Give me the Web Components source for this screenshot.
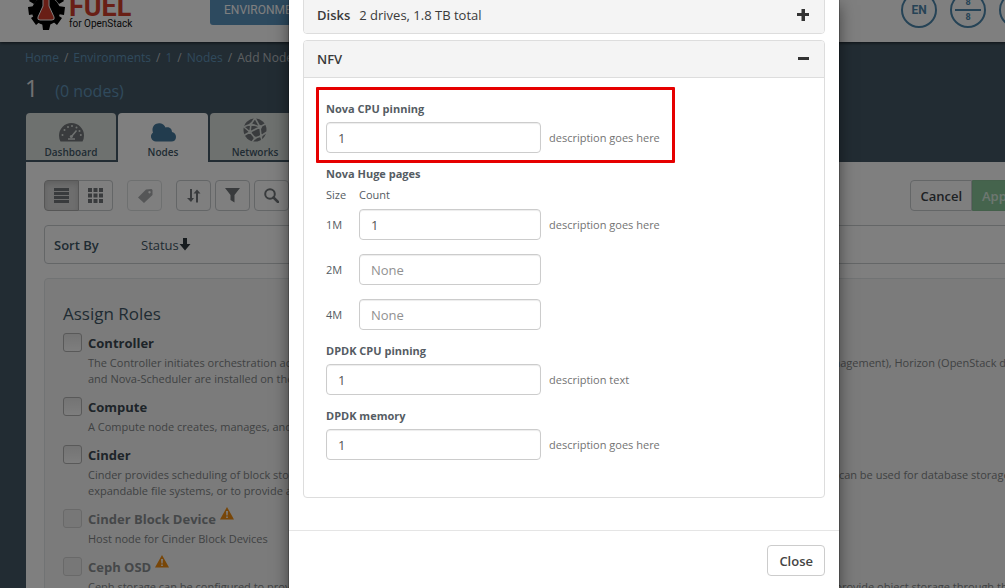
<!DOCTYPE html>
<html lang="en">
<head>
<meta charset="utf-8">
<title>Fuel for OpenStack - Add Nodes</title>
<style>
html, body { margin: 0; height: 100%; overflow: hidden; }
body { font-family: "Open Sans", "Noto Sans", sans-serif; font-size: 13px; color: #415766; background: #fff; }
</style>
</head>
<body>
<fuel-app></fuel-app>
<script>
const define = (name, html, init) => {
  const template = document.createElement('template');
  template.innerHTML = html;
  customElements.define(name, class extends HTMLElement {
    constructor() {
      super();
      this.attachShadow({ mode: 'open' }).append(template.content.cloneNode(true));
    }
    connectedCallback() {
      if (init && !this.ready) { this.ready = true; init(this, this.shadowRoot); }
    }
  });
};

/* Top bar: logo, navigation and round status buttons */
define('fuel-header', `
<style>
:host { display: flex; align-items: flex-end; height: 42px; overflow: hidden; background: #fff; box-shadow: 0 1px 3px rgba(0,0,0,.6); position: relative; font-family: "Roboto", sans-serif; }
.logo { display: flex; align-items: flex-end; gap: 4px; margin-left: 28px; padding-bottom: 12px; width: 182px; color: #111; }
.gear { width: 37px; height: 44px; flex: none; }
.words { display: flex; flex-direction: column; }
.words b { color: #d23f2c; font-size: 27px; line-height: 21px; }
.words span { font-size: 10px; line-height: 12px; white-space: nowrap; }
nav a { display: block; box-sizing: border-box; height: 38px; padding: 14px 14px 0; margin-bottom: 17px; border-radius: 3px; background: #5a94bf; color: #fff; font-size: 12px; line-height: 18px; text-decoration: none; }
.status { display: flex; gap: 13px; margin-left: auto; padding: 0 44px 14px 0; }
button { box-sizing: border-box; width: 36px; height: 36px; padding: 0; border: 2px solid #4c87ad; border-radius: 50%; background: none; color: #4c87ad; font: bold 12px/32px "Roboto", sans-serif; }
.nodes { display: flex; flex-direction: column; align-items: center; justify-content: center; font-size: 9px; line-height: 13px; }
.nodes i { width: 26px; height: 2px; background: #4c87ad; }
</style>
<div class="logo">
<svg class="gear" viewBox="0 0 37 44"><g fill="#000"><circle cx="18" cy="25" r="14"/><path d="M14 36h9l-2 8h-6zM3 32l6-4 5 6-6 5zM34 32l-6-4-5 6 6 5zM0 21l7-1v8l-6 1zM37 21l-7-1v8l6 1zM4 11l6 2-4 5-5-3zM33 11l-6 2 4 5 5-3z"/></g><path d="M15 8h6v12l5 11q1 3-2 3H12q-3 0-2-3l5-11z" fill="#d23f2c" stroke="#fff" stroke-width="1"/></svg>
<div class="words"><b>FUEL</b><span>for OpenStack</span></div></div>
<nav><a href="#environments">ENVIRONMENTS</a></nav>
<div class="status"><button>EN</button><button class="nodes"><span>8</span><i></i><span>8</span></button><button aria-label="User"></button><button aria-label="Notifications"></button></div>
`);

define('fuel-tab', `
<style>
:host { display: block; width: 90px; }
a { display: flex; flex-direction: column; align-items: center; justify-content: flex-end; box-sizing: border-box; height: 47px; padding-bottom: 1px; border-radius: 4px 4px 0 0; background: #dde2df; color: #415766; font-size: 10px; font-weight: 600; line-height: 14px; text-decoration: none; gap: 3px; }
:host([active]) a { height: 49px; padding-bottom: 3px; background: #fff; }
::slotted(svg) { display: block; }
</style>
<a href="#tab"><slot name="icon"></slot><slot></slot></a>
`);

define('tool-button', `
<style>
:host { display: block; }
button { display: flex; align-items: center; justify-content: center; box-sizing: border-box; width: 35px; height: 31px; padding: 0; border: 1px solid #c8ccce; border-radius: 4px; background: #fff; color: #72777a; }
:host([disabled]) button { opacity: .6; }
:host([side=left]) button { border-radius: 4px 0 0 4px; background: #dcdcdc; border-color: #adadad; box-shadow: inset 0 3px 5px rgba(0,0,0,.125); }
:host([side=right]) button { border-radius: 0 4px 4px 0; border-left: 0; width: 34px; }
</style>
<button aria-label="Tool"><slot></slot></button>
`);

define('role-item', `
<style>
:host { display: grid; grid-template-columns: 19px 1fr; column-gap: 6px; row-gap: 2px; margin-bottom: 10px; }
input { appearance: none; box-sizing: border-box; width: 19px; height: 19px; margin: 0; border: 1px solid #b2b2b2; border-radius: 3px; background: linear-gradient(#e8e8e8, #fcfcfc); }
label { display: flex; align-items: flex-start; gap: 4px; height: 20px; font-size: 13px; font-weight: 700; line-height: 20px; color: #3c4952; }
p { grid-column: 2; margin: 0; font-size: 11px; line-height: 16px; color: #808486; white-space: nowrap; }
svg { display: none; width: 14px; height: 13px; margin-top: -2px; }
:host([warn]) svg { display: block; }
:host([warn]) label { color: #8a8f92; }
:host([warn]) input { border-color: #d2d2d2; background: #efefef; }
</style>
<input type="checkbox" id="role"><label for="role"><slot name="name"></slot><svg viewBox="0 0 14 13"><path d="M7 0 14 12.5H0z" fill="#f08c10"/><path d="M6.1 4h1.8l-.3 4.6H6.4zM6.2 9.6h1.6v1.5H6.2z" fill="#fff"/></svg></label>
<p><slot></slot></p>
`, (host, root) => { root.querySelector('input').disabled = host.hasAttribute('warn'); });

/* Page behind the dialog */
define('nodes-page', `
<style>
:host { display: block; min-height: 100%; background: #455966; }
.crumbs { display: flex; gap: 5px; padding: 7px 25px 0; font-size: 12px; line-height: 18px; color: #b9bfc3; }
.crumbs a { color: #6094ba; text-decoration: none; }
h1 { display: flex; align-items: baseline; gap: 17px; margin: 7px 25px 0; height: 39px; font-size: 23px; line-height: 28px; font-weight: 400; color: #e4e6e8; }
h1 span { font-size: 16px; color: #6094ba; }
.tabs { display: flex; gap: 2px; height: 49px; margin: 0 26px; }
main { margin: 0 26px; padding: 18px 18px 60px; background: #fff; }
/* the white band of the content runs on to the right edge of the window */
.bar { display: flex; align-items: center; height: 31px; }
.group { display: flex; }
.mid { margin: 0 14px; }
.tools { display: flex; gap: 4px; }
.actions { display: flex; margin-left: auto; }
.actions button { box-sizing: border-box; height: 31px; padding: 0 9px; border: 1px solid #c8ccce; border-radius: 4px 0 0 4px; background: #fff; color: #3a4248; font: 600 13px/18px "Open Sans", sans-serif; }
.actions .apply { width: 112px; border-color: #88c197; border-radius: 0 4px 4px 0; background: #8ac99b; color: #ddeee2; white-space: nowrap; }
.sort { display: flex; align-items: center; box-sizing: border-box; height: 39px; margin-top: 14px; padding: 0 9px; border: 1px solid #c8ccce; border-radius: 4px; font-size: 13px; }
.sort b { width: 87px; font-weight: 600; }
section { box-sizing: border-box; margin-top: 14px; padding: 24px 18px 40px; border: 1px solid #e3e6e8; border-radius: 4px; background: #f7f7f7; height: 600px; }
h2 { margin: 0 0 8px; font-size: 17px; font-weight: 400; line-height: 22px; color: #415766; }
</style>
<div class="crumbs"><a href="#h">Home</a><span>/</span><a href="#e">Environments</a><span>/</span><a href="#1">1</a><span>/</span><a href="#n">Nodes</a><span>/</span><span>Add Nodes</span></div>
<h1>1<span>(0 nodes)</span></h1>
<div class="tabs">
<fuel-tab><svg slot="icon" width="25" height="19" viewBox="0 0 25 19"><path d="M12.5 0A12.5 12.5 0 0 0 0 12.500Q0 16 1.500 18.500H23.500Q25 16 25 12.500A12.500 12.500 0 0 0 12.500 0z" fill="#72777a"/><g fill="#dde2df"><circle cx="3.500" cy="12" r="1"/><circle cx="5.500" cy="7" r="1"/><circle cx="9" cy="4" r="1"/><circle cx="13" cy="3" r="1"/><circle cx="17.500" cy="4.500" r="1"/><circle cx="20.500" cy="8" r="1"/><circle cx="21.800" cy="12" r="1"/></g><path d="m17.500 7.500-5 6M9 16h7" stroke="#dde2df" stroke-width="1.500"/><circle cx="12.300" cy="13.500" r="1.500" fill="#dde2df"/></svg>Dashboard</fuel-tab>
<fuel-tab active><svg slot="icon" width="25" height="19" viewBox="0 0 25 19"><path d="M5 18.500A5 5 0 0 1 2 9.500C0 4 4-.500 9 .200c3 .300 4.500 2 5.500 4.300 3-1 6.500.500 6.500 4.500 3 .500 4 3 4 5 0 3-2 4.500-4.500 4.500z" fill="#44799c"/></svg>Nodes</fuel-tab>
<fuel-tab><svg slot="icon" width="24" height="24" viewBox="0 0 24 24"><circle cx="12" cy="12" r="11.500" fill="#72777a"/><g fill="none" stroke="#dde2df" stroke-width="1.600"><path d="M0 9 8 6l9 3 7-4M8 6 12 0l5 9 1 9 6-4M8 6l-1 8-7 4M7 14l10-5M7 14l5 6 6-2M12 20l-3 4M18 18l1 5M1 9l6 5"/></g><g fill="#dde2df"><circle cx="8" cy="6" r="1.500"/><circle cx="17" cy="9" r="2"/><circle cx="7" cy="14" r="1.800"/><circle cx="12" cy="20" r="1.500"/><circle cx="18" cy="18" r="1.500"/></g></svg>Networks</fuel-tab>
</div>
<main>
<div class="bar">
<div class="group"><tool-button side="left"><svg width="15" height="15"><path d="M0 0h15v3H0zM0 4h15v3H0zM0 8h15v3H0zM0 12h15v3H0z" fill="currentColor"/></svg></tool-button><tool-button side="right"><svg width="15" height="15"><path d="M0 0h4v4H0zM5.500 0h4v4h-4zM11 0h4v4h-4zM0 5.500h4v4H0zM5.500 5.500h4v4h-4zM11 5.500h4v4h-4zM0 11h4v4H0zM5.500 11h4v4h-4zM11 11h4v4h-4z" fill="currentColor"/></svg></tool-button></div>
<tool-button class="mid" disabled><svg width="16" height="16"><path d="M9 1.500 14.500 1l1 1 .0 5L7 15 1 9.500zM12.500 3a1.200 1.200 0 1 0 .01 0z" fill="currentColor" fill-rule="evenodd"/></svg></tool-button>
<div class="tools">
<tool-button><svg width="14" height="14"><path d="M3 0h2v9h2l-3 4-4-4h3zM9 13.500h2v-9h2.500L10 .500 6.500 4.500H9z" fill="currentColor"/></svg></tool-button>
<tool-button><svg width="15" height="15"><path d="M0 0h15L9.500 7v7.500L5.500 12V7z" fill="currentColor"/></svg></tool-button>
<tool-button><svg width="15" height="15"><circle cx="6" cy="6" r="4.800" fill="none" stroke="currentColor" stroke-width="2"/><path d="m9.500 9.500 4.500 4.500" stroke="currentColor" stroke-width="2.500" stroke-linecap="round"/></svg></tool-button>
</div>
<div class="actions"><button>Cancel</button><button class="apply">Apply Changes</button></div>
</div>
<div class="sort"><b>Sort By</b><span>Status</span><svg width="12" height="13"><path d="M4 0h4v6h3.500L6 12.500.500 6H4z" fill="#2f383e"/></svg></div>
<section>
<h2>Assign Roles</h2>
<role-item><span slot="name">Controller</span>The Controller initiates orchestration activities and provides an external API. Other components like Glance (image storage), Keystone (identity management), Horizon (OpenStack dashboard)<br>and Nova-Scheduler are installed on the controller as well.</role-item>
<role-item><span slot="name">Compute</span>A Compute node creates, manages, and terminates virtual machine instances.</role-item>
<role-item><span slot="name">Cinder</span>Cinder provides scheduling of block storage resources, typically delivered over iSCSI and other compatible backend storage systems. Block storage can be used for database storage,<br>expandable file systems, or to provide a server with access to raw block level devices.</role-item>
<role-item warn><span slot="name">Cinder Block Device</span>Host node for Cinder Block Devices</role-item>
<role-item warn><span slot="name">Ceph OSD</span>Ceph storage can be configured to provide storage for block volumes (Cinder), images (Glance) and ephemeral instance storage (Nova). It can also provide object storage through the S3 and Swift API</role-item>
</section>
</main>
`);

/* Collapsible panel with a grey heading */
define('node-panel', `
<style>
:host { display: block; border: 1px solid #ddd; border-radius: 4px; overflow: hidden; }
header { display: flex; align-items: center; height: 36px; padding: 0 13px; background: #f4f4f4; color: #3a3a3a; font-size: 13px; }
b { font-weight: 600; margin-right: 9px; }
button { display: flex; margin-left: auto; padding: 2px; border: 0; background: none; }
.open { display: none; }
:host([open]) .open { display: block; border-top: 1px solid #ddd; padding: 9px 12px 37px; }
:host([open]) .plus { display: none; }
</style>
<header><b><slot name="title"></slot></b><slot name="info"></slot><button aria-label="Toggle"><svg width="12" height="12"><path d="M1 4h11v3H1z" fill="#333"/><path class="plus" d="M4.500 0H8v12H4.500zM0 4h2v3H0z" fill="#333"/></svg></button></header>
<div class="open"><slot></slot></div>
`);

const inputCss = `input { box-sizing: border-box; width: 100%; height: 31px; margin: 0; padding: 0 11px; border: 1px solid #ccc; border-radius: 4px; box-shadow: inset 0 1px 1px rgba(0,0,0,.075); background: #fff; color: #555; font: 13px/18px "Open Sans", sans-serif; } input::placeholder { color: #919191; opacity: 1; }`;

define('text-field', `
<style>
:host { display: block; margin: 13px 10px 0; }
:host([marked]) { width: fit-content; margin: 0; padding: 11px 12px 7px 7px; border: 3px solid #e60000; border-radius: 1px; }
label { display: block; margin-bottom: 5px; font-size: 11px; font-weight: 700; line-height: 16px; color: #555c63; }
.row { display: grid; grid-template-columns: 215px auto; align-items: center; column-gap: 8px; font-size: 11px; color: #737373; }
${inputCss}
</style>
<label for="value"></label><div class="row"><input id="value" type="text" value="1"><span><slot></slot></span></div>
`, (host, root) => { root.querySelector('label').textContent = host.getAttribute('label'); });

define('page-size', `
<style>
:host { display: grid; grid-template-columns: 33px 182px auto; align-items: center; margin-bottom: 14px; font-size: 11px; color: #737373; }
label { color: #555c63; }
span { margin-left: 8px; }
${inputCss}
</style>
<label for="count"></label><input id="count" type="text" placeholder="None"><span><slot></slot></span>
`, (host, root) => {
  root.querySelector('label').textContent = host.getAttribute('size');
  root.querySelector('input').value = host.getAttribute('value') || '';
});

define('node-dialog', `
<style>
:host { display: block; width: 550px; height: 700px; background: #fff; box-shadow: 0 5px 15px rgba(0,0,0,.5), 0 0 0 1px rgba(0,0,0,.2); color: #555c63; }
.body { padding: 0 14px 32px; }
.disks { margin-top: -4px; margin-bottom: 6px; }
.huge { margin: 3px 10px 0; font-size: 11px; line-height: 16px; }
h3 { margin: 0; font-size: 11px; font-weight: 700; }
.cols { display: grid; grid-template-columns: 33px auto; margin: 5px 0 6px; }
.last { margin-bottom: 0; }
footer { display: flex; justify-content: flex-end; padding: 14px; border-top: 1px solid #e5e5e5; }
footer button { box-sizing: border-box; height: 31px; padding: 0 11px; border: 1px solid #ccc; border-radius: 4px; background: #fff; color: #444; font: 600 13px/18px "Open Sans", sans-serif; }
</style>
<div class="body">
<node-panel class="disks"><span slot="title">Disks</span><span slot="info">2 drives, 1.8 TB total</span></node-panel>
<node-panel open><span slot="title">NFV</span>
<text-field marked label="Nova CPU pinning">description goes here</text-field>
<div class="huge"><h3>Nova Huge pages</h3><div class="cols"><span>Size</span><span>Count</span></div>
<page-size size="1M" value="1">description goes here</page-size><page-size size="2M"></page-size><page-size class="last" size="4M"></page-size></div>
<text-field label="DPDK CPU pinning">description text</text-field>
<text-field label="DPDK memory">description goes here</text-field>
</node-panel>
</div>
<footer><button>Close</button></footer>
`);

define('fuel-app', `
<style>
:host { display: block; position: relative; min-width: 1128px; height: 100vh; overflow: hidden; }
.shade { position: absolute; inset: 0; display: flex; justify-content: center; background: rgba(0,0,0,.5); }
</style>
<fuel-header></fuel-header>
<nodes-page></nodes-page>
<div class="shade"><node-dialog role="dialog" aria-label="Node details"></node-dialog></div>
`);
</script>
</body>
</html>
